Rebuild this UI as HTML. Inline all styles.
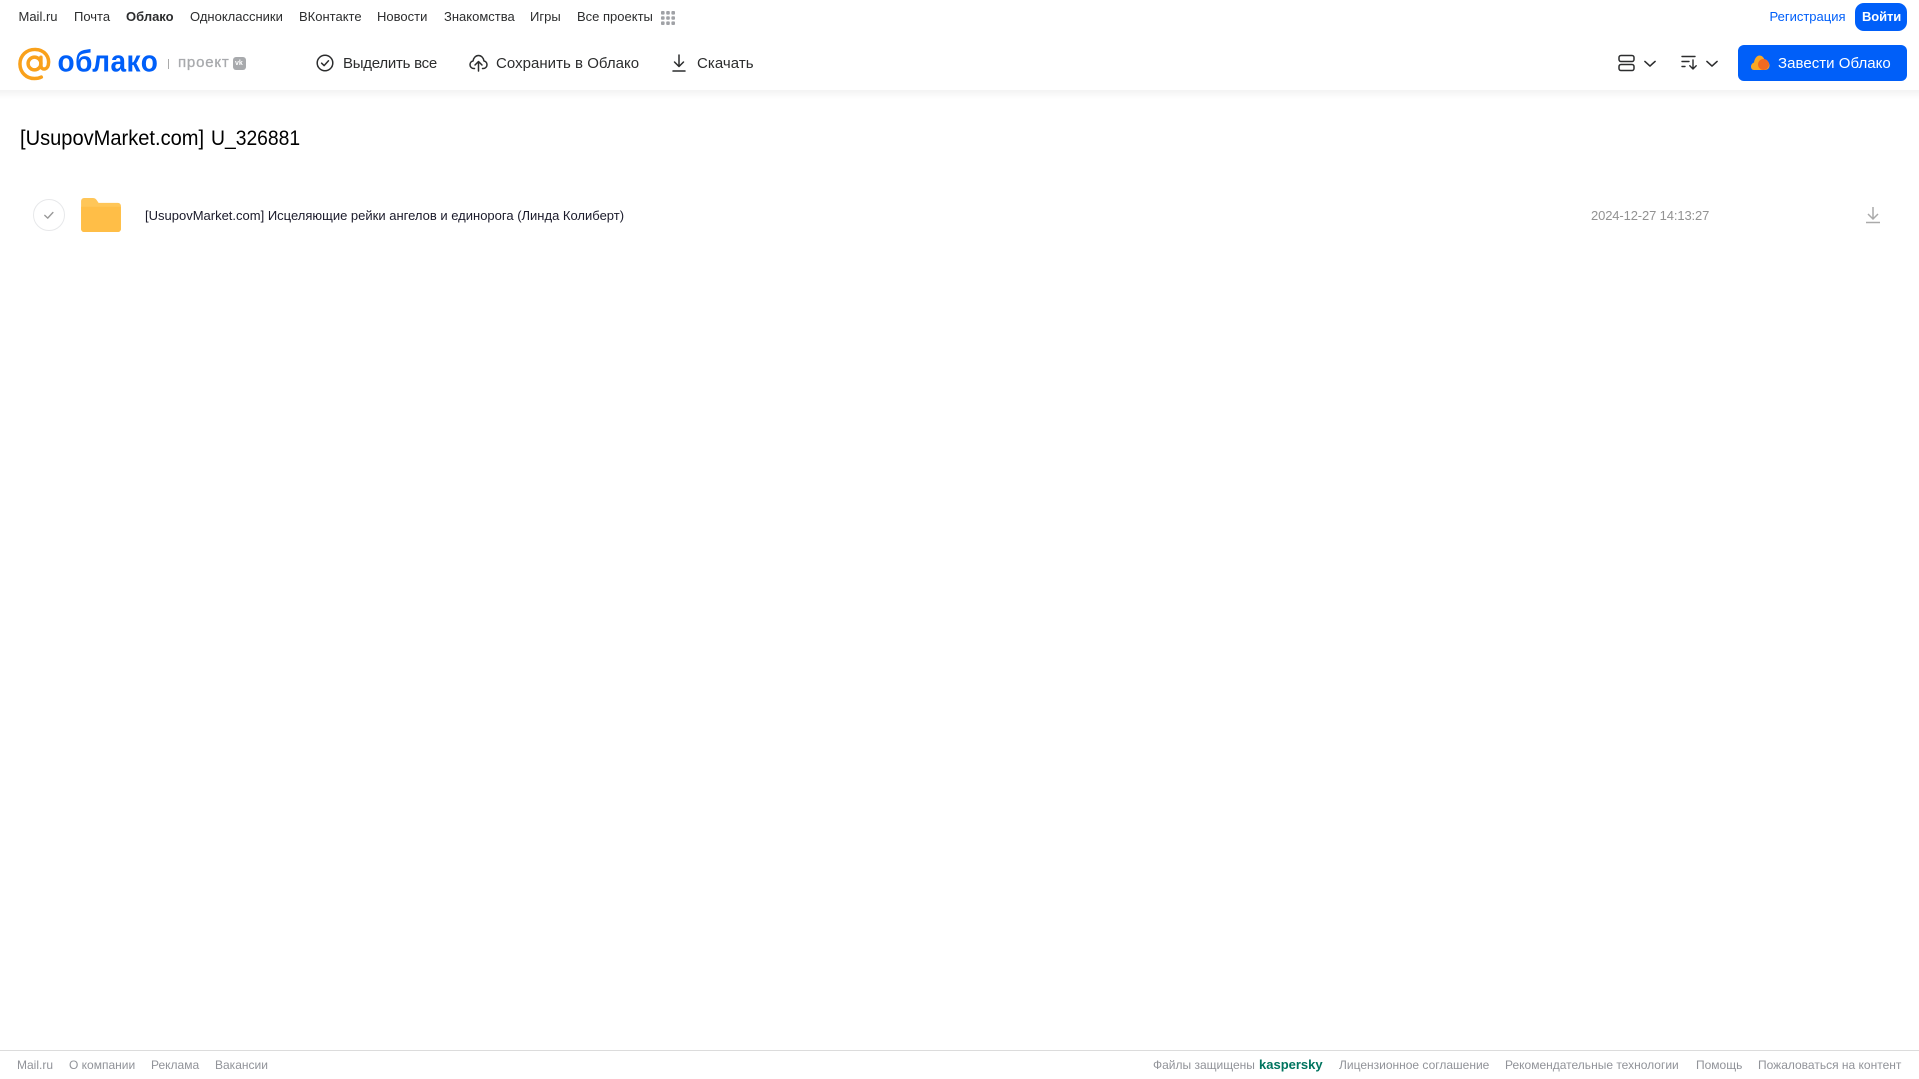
<!DOCTYPE html>
<html lang="ru"><head><meta charset="utf-8"><title>Облако</title>
<style>
html,body{margin:0;padding:0;width:1919px;height:1079px;overflow:hidden;background:#fff;font-family:"Liberation Sans",sans-serif}
.t{position:absolute;white-space:nowrap;line-height:20px}
.n{top:7px;font-size:13px;color:#2c2d2e}
.b{top:54px;font-size:15px;color:#2c2d2e}
.f{top:1055px;font-size:12px;color:#919399}
svg{position:absolute;overflow:visible}
#sh{position:absolute;left:0;top:90px;width:1919px;height:9px;background:linear-gradient(#f3f3f3,#fff)}
</style></head><body>
<div id="sh"></div>

<span class="t n" style="left:18.500px">Mail.ru</span>
<span class="t n" style="left:74px">Почта</span>
<span class="t n" style="left:126px;font-weight:bold">Облако</span>
<span class="t n" style="left:190px">Одноклассники</span>
<span class="t n" style="left:299px">ВКонтакте</span>
<span class="t n" style="left:377px">Новости</span>
<span class="t n" style="left:444px">Знакомства</span>
<span class="t n" style="left:530px">Игры</span>
<span class="t n" style="left:577px">Все проекты</span>
<svg style="left:661px;top:11px" width="14" height="14" fill="#a0a2a6">
<rect width="3.600" height="3.600" rx="1"/><rect x="5.200" width="3.600" height="3.600" rx="1"/><rect x="10.400" width="3.600" height="3.600" rx="1"/>
<rect y="5.200" width="3.600" height="3.600" rx="1"/><rect x="5.200" y="5.200" width="3.600" height="3.600" rx="1"/><rect x="10.400" y="5.200" width="3.600" height="3.600" rx="1"/>
<rect y="10.400" width="3.600" height="3.600" rx="1"/><rect x="5.200" y="10.400" width="3.600" height="3.600" rx="1"/><rect x="10.400" y="10.400" width="3.600" height="3.600" rx="1"/></svg>

<span class="t n" style="left:1769.500px;color:#005ff9">Регистрация</span>
<div style="position:absolute;left:1855px;top:3px;width:52px;height:28px;border-radius:9px;background:#005ff9"></div>
<span class="t n" style="left:1862px;color:#fff;font-weight:bold;letter-spacing:-.1px">Войти</span>

<svg style="left:18px;top:47px" width="33" height="34" viewBox="0 0 34 34" fill="none" stroke="#f9a11b" stroke-width="3.600">
<circle cx="17" cy="16.500" r="6.600"/>
<path d="M23.600 10v8.500c0 5 6.400 5 7.600-.5 1.800-8.400-4-15.800-13.200-16C8.500 1.800 2 8.500 2 17c0 9 7 15 15 15 2.800 0 5-.5 7-1.500" stroke-linecap="round"/></svg>
<span class="t" style="left:57.500px;top:46px;font-size:28px;line-height:32px;font-weight:bold;color:#005ff9;letter-spacing:.5px;transform:scaleY(1.080);transform-origin:0 60%">облако</span>
<div style="position:absolute;left:168px;top:59px;width:1px;height:10px;background:#aaa"></div>
<span class="t" style="left:178px;top:53px;font-size:15px;color:#a8aaad;letter-spacing:.8px;-webkit-text-stroke:.3px #a8aaad">проект</span>
<div style="position:absolute;left:233px;top:57px;width:13px;height:13px;border-radius:3px;background:#a8aaad"></div>
<span class="t" style="left:235px;top:58px;font-size:7px;line-height:11px;font-weight:bold;color:#fff">vk</span>

<svg style="left:316px;top:54px" width="18" height="18" viewBox="0 0 18 18" fill="none" stroke="#2c2d2e" stroke-width="1.500">
<circle cx="9" cy="9" r="7.800"/><path d="M5.600 9.200l2.500 2.400 4.400-4.800" stroke-linecap="round" stroke-linejoin="round"/></svg>
<span class="t b" style="left:343px;letter-spacing:-.25px">Выделить все</span>

<svg style="left:469px;top:54px" width="19" height="18" viewBox="0 0 19 18" fill="none" stroke="#2c2d2e" stroke-width="1.500" stroke-linecap="round" stroke-linejoin="round">
<path d="M5.500 14.500H4.800C2.600 14.500 1 12.700 1 10.700c0-1.900 1.300-3.400 3-3.700C4.500 3.700 6.800 1.500 9.500 1.500s5 2.200 5.500 5.500c1.700.3 3 1.800 3 3.700 0 2-1.600 3.800-3.800 3.800h-.7"/>
<path d="M9.500 17V8M6 11l3.500-3.500L13 11"/></svg>
<span class="t b" style="left:496px;letter-spacing:.03px">Сохранить в Облако</span>

<svg style="left:671px;top:54px" width="16" height="18" viewBox="0 0 16 18" fill="none" stroke="#2c2d2e" stroke-width="1.500" stroke-linecap="round" stroke-linejoin="round">
<path d="M8 1v11M3.500 8L8 12.500 12.500 8M2 17h12"/></svg>
<span class="t b" style="left:697px;letter-spacing:.05px">Скачать</span>

<svg style="left:1618px;top:54px" width="17" height="18" viewBox="0 0 17 18" fill="none" stroke="#2c2d2e" stroke-width="1.500">
<rect x="1" y="1.500" width="15" height="6" rx="2"/><rect x="1" y="10.500" width="15" height="6" rx="2"/></svg>
<svg style="left:1644px;top:60px" width="12" height="8" viewBox="0 0 13 8" fill="none" stroke="#2c2d2e" stroke-width="1.700" stroke-linecap="round" stroke-linejoin="round"><path d="M1 1.200l5.500 5 5.500-5"/></svg>
<svg style="left:1681px;top:55px" width="17" height="15" viewBox="0 0 17 15" fill="none" stroke="#2c2d2e" stroke-width="1.400" stroke-linecap="round" stroke-linejoin="round">
<path d="M1 1.500h13M1 6.500h7M1 11.500h3M12 5v9M8.800 10.800L12 14l3.200-3.200"/></svg>
<svg style="left:1706px;top:60px" width="12" height="8" viewBox="0 0 13 8" fill="none" stroke="#2c2d2e" stroke-width="1.700" stroke-linecap="round" stroke-linejoin="round"><path d="M1 1.200l5.500 5 5.500-5"/></svg>

<div style="position:absolute;left:1738px;top:45px;width:169px;height:36px;border-radius:6px;background:#005ff9"></div>
<svg style="left:1751px;top:55px" width="19" height="16" viewBox="0 0 19 16">
<path d="M3 15C1 15 0 13.500 0 11.500 0 9.500 1.500 8 3 7.500 3.500 3.500 6 .5 8.500.5c2.500 0 4.500 2 5 4.500 2.500 0 5 2.500 5 5.500 0 2.500-2 4.500-4.500 4.500z" fill="#f9a825"/>
<circle cx="12.500" cy="9.500" r="5.500" fill="#f26a21"/></svg>
<span class="t" style="left:1778px;top:54px;font-size:15px;color:#fff;letter-spacing:.04px">Завести Облако</span>

<span class="t" style="left:20px;top:125.500px;font-size:21px;line-height:26px;color:#000;transform:scaleX(.956);transform-origin:0 0">[UsupovMarket.com]</span>
<span class="t" style="left:210.500px;top:125.500px;font-size:21px;line-height:26px;color:#000;transform:scaleX(.92);transform-origin:0 0">U_326881</span>

<svg style="left:33px;top:199px" width="32" height="32" viewBox="0 0 32 32" fill="none">
<circle cx="16" cy="16" r="15.500" stroke="#e7e8ea"/>
<path d="M11.800 16.400l2.900 2.700 5.200-5.600" stroke="#999" stroke-width="1.400" stroke-linecap="round" stroke-linejoin="round"/></svg>
<svg style="left:81px;top:198px" width="40" height="34" viewBox="0 0 41 35">
<path d="M0 3a3 3 0 0 1 3-3h9c2 0 3 .8 4 2l2 3h20a3 3 0 0 1 3 3v24a3 3 0 0 1-3 3H3a3 3 0 0 1-3-3z" fill="#ffc658"/>
<path d="M0 9h41v23a3 3 0 0 1-3 3H3a3 3 0 0 1-3-3z" fill="#ffbe47"/></svg>
<span class="t" style="left:145px;top:206px;font-size:13px;color:#1a1a2a">[UsupovMarket.com] Исцеляющие рейки ангелов и единорога (Линда Колиберт)</span>
<span class="t" style="left:1591px;top:206px;font-size:13px;color:#929292;letter-spacing:-.13px">2024-12-27 14:13:27</span>
<svg style="left:1866px;top:206px" width="14" height="18" viewBox="0 0 14 18" fill="none" stroke="#aaa" stroke-width="1.500">
<path d="M7 1v12M2 8l5 5 5-5M0 16.500h14"/></svg>

<div style="position:absolute;left:0;top:1050px;width:1919px;height:1px;background:#dcdcdc"></div>
<span class="t f" style="left:17px">Mail.ru</span>
<span class="t f" style="left:69px">О компании</span>
<span class="t f" style="left:151px">Реклама</span>
<span class="t f" style="left:215px">Вакансии</span>
<span class="t f" style="left:1153px">Файлы защищены</span>
<span class="t f" style="left:1259px;font-weight:bold;color:#00745f;font-size:13px">kaspersky</span>
<span class="t f" style="left:1339px">Лицензионное соглашение</span>
<span class="t f" style="left:1505px">Рекомендательные технологии</span>
<span class="t f" style="left:1696px">Помощь</span>
<span class="t f" style="left:1758px">Пожаловаться на контент</span>
</body></html>
